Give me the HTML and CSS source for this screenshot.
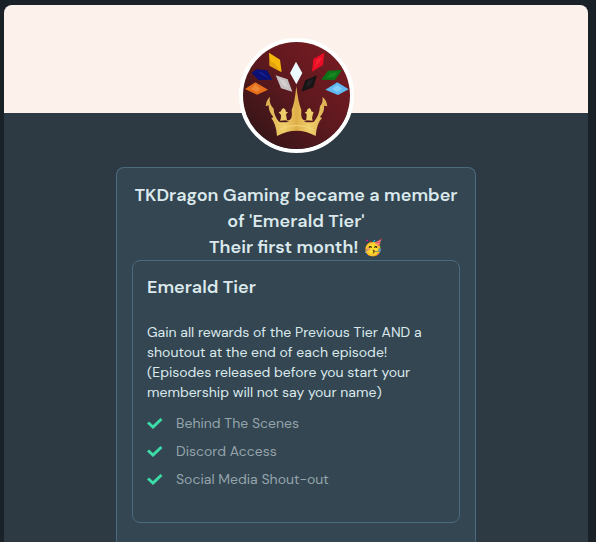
FILE: index.html
```html
<!DOCTYPE html>
<html lang="en">
<head>
<meta charset="utf-8">
<meta name="viewport" content="width=device-width, initial-scale=1">
<title>Emerald Tier</title>
<link rel="stylesheet" href="styles.css">
</head>
<body>
<main class="card">
  <div class="cover"></div>
  <svg class="avatar" viewBox="39 36 321 321" role="img" aria-label="TKDragon Gaming">
    <defs>
      <linearGradient id="wine" x1="0.9" y1="0.1" x2="0.1" y2="0.9">
        <stop offset="0" stop-color="#761b22"/>
        <stop offset="0.5" stop-color="#5c191e"/>
        <stop offset="1" stop-color="#351518"/>
      </linearGradient>
      <linearGradient id="gold" x1="0" y1="0" x2="1" y2="0">
        <stop offset="0" stop-color="#dcae50"/>
        <stop offset="0.3" stop-color="#efcf6c"/>
        <stop offset="0.5" stop-color="#dfae48"/>
        <stop offset="0.7" stop-color="#efcf6c"/>
        <stop offset="1" stop-color="#dcae50"/>
      </linearGradient>
    </defs>
    <rect x="39" y="36" width="321" height="321" fill="url(#wine)"/>
    <path fill="#f5b90c" d="M117 68l33 21 5 37-36-19z"/>
    <path fill="#e5a20f" d="M119 92l14 8 20 26-34-19z"/>
    <path fill="#0a1074" d="M80 118l31 3 16 28-42 1-20-22z"/>
    <path fill="#1b2795" d="M84 122l12 12 24 12-24-18z"/>
    <path fill="#e56f1c" d="M76 157l38 22-33 15-36-17z"/>
    <path fill="#ee8736" d="M76 163l16 15-13 7-15-8z"/>
    <path fill="#c5bfc0" d="M137 136l36 12 14 37-34-10z"/>
    <path fill="#d5cfd0" d="M147 145l19 8 9 20-18-8z"/>
    <path fill="#edfaff" d="M198 95l19 34-18 34-19-34z"/>
    <path fill="#171416" d="M261 136l-11 36-36 13 12-34z"/>
    <path fill="#241f21" d="M250 146l-9 20-15 7 8-20z"/>
    <path fill="#e90e25" d="M283 68l-4 37-33 20 4-38z"/>
    <path fill="#f62336" d="M276 80l-8 17-15 17 8-24z"/>
    <path fill="#0b7416" d="M336 120l-21 30-41-1 20-27z"/>
    <path fill="#188523" d="M325 127l-13 15-22 1 12-14z"/>
    <path fill="#60b9f0" d="M322 157l34 21-32 17-38-16z"/>
    <path fill="#85cdf9" d="M322 165l15 12-15 8-16-8z"/>
    <path fill="url(#gold)" d="M120 201Q108 211 107 229L116 226Q115 245 130 261L124 265Q138 281 141 318Q200 287 257 318Q260 280 276 264L270 261Q285 243 282 227L292 229Q291 211 277 201Q281 216 270 229Q268 256 252 275Q242 279 220 275Q229 275 230 271L248 272Q245 262 248 255L251 247L244 244Q244 237 238 234Q230 238 230 245L224 247L230 253Q230 264 228 271Q211 274 214 240Q205 220 199 169Q194 220 185 240Q189 274 171 271Q170 265 168 253L174 247L168 245Q168 238 160 234Q153 238 153 244L146 247L153 255Q154 263 150 272L168 271Q171 275 178 275Q156 279 147 275Q131 256 131 236L125 229Q117 217 120 201Z"/>
    <path fill="none" stroke="#f3d87c" stroke-width="3" stroke-linecap="round" d="M150 298Q200 274 248 298"/>
  </svg>
  <section class="panel">
    <h1 class="headline">TKDragon Gaming became a member of 'Emerald Tier'<br>Their first month! <span class="emoji">🥳</span></h1>
    <article class="tier">
      <h2 class="tier-name">Emerald Tier</h2>
      <p class="description">Gain all rewards of the Previous Tier AND a shoutout at the end of each episode! (Episodes released before you start your membership will not say your name)</p>
      <ul class="perks">
        <li><svg class="check" viewBox="0 0 16 12" aria-hidden="true"><path d="M1 5.500L6 10L14.500 2"/></svg>Behind The Scenes</li>
        <li><svg class="check" viewBox="0 0 16 12" aria-hidden="true"><path d="M1 5.500L6 10L14.500 2"/></svg>Discord Access</li>
        <li><svg class="check" viewBox="0 0 16 12" aria-hidden="true"><path d="M1 5.500L6 10L14.500 2"/></svg>Social Media Shout-out</li>
      </ul>
    </article>
  </section>
</main>
</body>
</html>
```
FILE: styles.css
```css
* { box-sizing: border-box; }
html { background: #1a2228; }
body {
  margin: 0;
  padding: 5px 8px 0 4px;
  color: #dbe9ec;
  font-family: "DM Sans", Inter, sans-serif;
}
.card {
  display: flex;
  flex-direction: column;
  align-items: center;
  min-height: calc(100vh - 5px);
  border-radius: 8px 8px 0 0;
  overflow: hidden;
  background: #2d3a44;
}
.cover {
  align-self: stretch;
  height: 108px;
  background: #fdf1ec;
}
.avatar {
  width: 115px;
  height: 115px;
  margin-top: -75px;
  border: 4px solid #fff;
  border-radius: 50%;
}
.panel {
  width: 100%;
  max-width: 360px;
  margin-top: 14px;
  padding: 14px 15px 24px;
  flex-grow: 1;
  border: 1px solid #4a6b7d;
  border-bottom: 0;
  border-radius: 8px 8px 0 0;
  background: #334652;
}
h1, h2, p, ul { margin: 0; }
.headline {
  font-size: 18px;
  font-weight: 600;
  line-height: 26px;
  text-align: center;
}
.emoji {
  font-size: 16px;
  line-height: 1;
}
.tier {
  padding: 13px 14px 33px;
  border: 1px solid #4a6b7d;
  border-radius: 8px;
}
.tier-name {
  font-size: 18px;
  font-weight: 600;
  line-height: 26px;
}
.description {
  margin-top: 22px;
  font-size: 14px;
  line-height: 20px;
}
.perks {
  display: grid;
  gap: 8px;
  margin-top: 11px;
  padding: 0;
  list-style: none;
  color: #95a4aa;
  font-size: 14px;
  line-height: 20px;
}
.perks li {
  display: flex;
  align-items: center;
  gap: 13px;
}
.check {
  width: 16px;
  height: 12px;
  fill: none;
  stroke: #3cdba8;
  stroke-width: 3;
}
```
